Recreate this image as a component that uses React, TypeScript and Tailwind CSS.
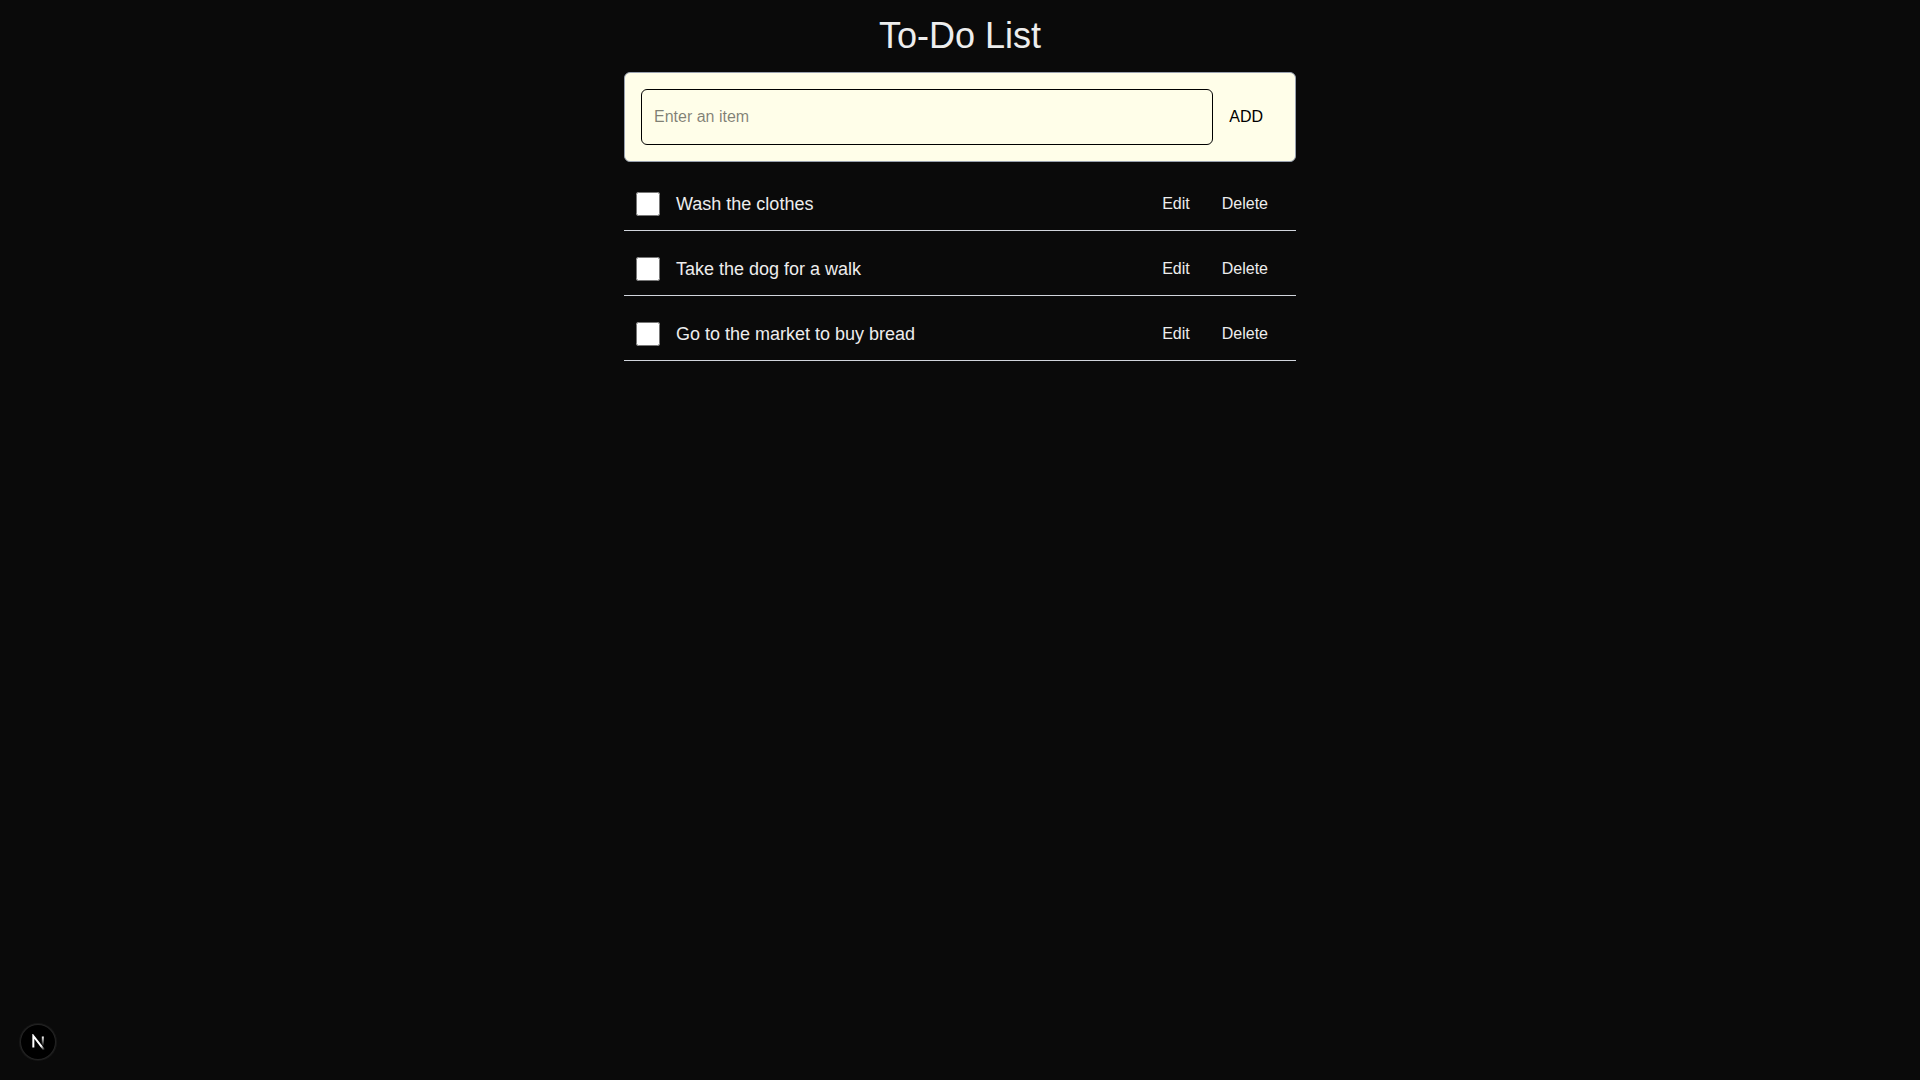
const items = ["Wash the clothes", "Take the dog for a walk", "Go to the market to buy bread"];

function DevBadge() {
  return (
    <button
      type="button"
      aria-label="Open developer tools"
      className="fixed bottom-5 left-5 flex size-9 items-center justify-center rounded-full bg-black shadow-[0_0_0_1px_#171717,inset_0_0_0_1px_rgba(255,255,255,0.14)]"
    >
      <svg width="16" height="16" viewBox="-1 -1 16 16" fill="none" aria-hidden="true">
        <defs>
          <linearGradient id="diagonal" x1="9.95" y1="11.13" x2="15.26" y2="17.97" gradientUnits="userSpaceOnUse">
            <stop stopColor="#fff" />
            <stop offset="0.6" stopColor="#fff" stopOpacity="0" />
          </linearGradient>
          <linearGradient id="stem" x1="11.82" y1="1.4" x2="11.79" y2="11" gradientUnits="userSpaceOnUse">
            <stop stopColor="#fff" />
            <stop offset="1" stopColor="#fff" stopOpacity="0" />
          </linearGradient>
        </defs>
        <path d="M13.3 15.2L2.34 1V12.6" stroke="url(#diagonal)" strokeWidth="2" />
        <path d="M11.825 1.5V13.1" stroke="url(#stem)" strokeWidth="2" />
      </svg>
    </button>
  );
}

export default function App() {
  return (
    <main className="min-h-screen bg-[#0a0a0a] font-['Liberation_Sans',Arial,sans-serif] text-[#ededed]">
      <div className="mx-auto max-w-2xl pt-4">
        <h1 className="mb-4 text-center text-4xl">To-Do List</h1>
        <form
          className="mb-4 flex rounded-md border border-gray-400 bg-[#fffee9] p-4 text-black"
          onSubmit={(e) => e.preventDefault()}
        >
          <input
            type="text"
            aria-label="New item"
            placeholder="Enter an item"
            className="min-w-0 grow rounded-md border border-black p-3 placeholder:text-black/50"
          />
          <button type="submit" className="p-4">
            ADD
          </button>
        </form>
        <ul className="flex flex-col gap-3">
          {items.map((item, i) => (
            <li key={item} className="flex items-center border-b border-gray-300 p-3">
              <input type="checkbox" id={`item-${i}`} className="size-6" />
              <label htmlFor={`item-${i}`} className="grow pl-4 text-lg">
                {item}
              </label>
              <button type="button" className="px-4">
                Edit
              </button>
              <button type="button" className="px-4">
                Delete
              </button>
            </li>
          ))}
        </ul>
      </div>
      <DevBadge />
    </main>
  );
}
